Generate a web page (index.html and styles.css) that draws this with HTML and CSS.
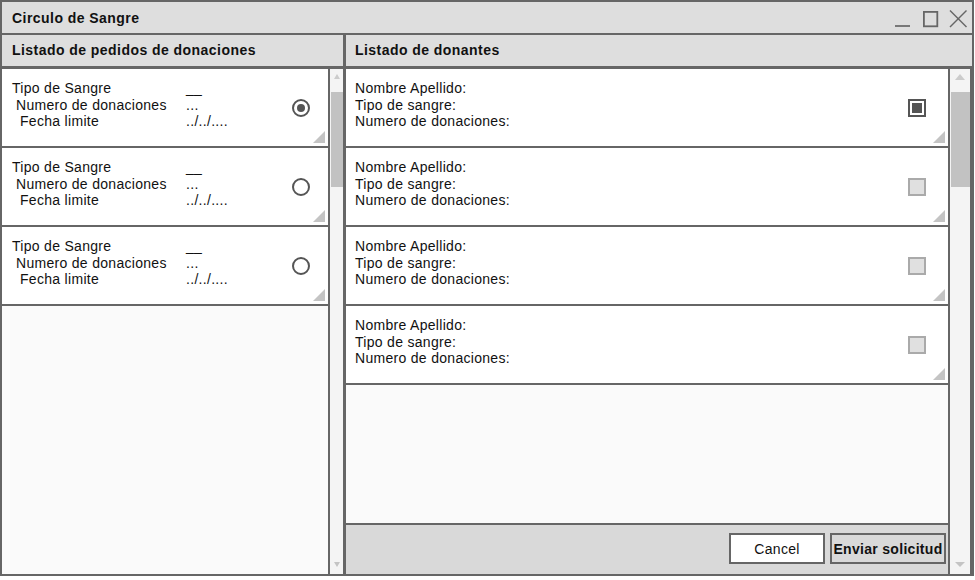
FILE: index.html
```html
<!DOCTYPE html>
<html lang="es">
<head>
<meta charset="utf-8">
<title>Circulo de Sangre</title>
<link rel="stylesheet" href="styles.css">
</head>
<body>
<div class="window">
  <div class="titlebar">
    <span class="title">Circulo de Sangre</span>
    <svg class="controls" width="76" height="31" viewBox="0 0 76 31" aria-hidden="true">
      <line x1="1" y1="24" x2="16" y2="24" stroke="#666" stroke-width="1.7"/>
      <rect x="29.9" y="9.9" width="13.4" height="14.4" fill="none" stroke="#666" stroke-width="1.8"/>
      <line x1="56" y1="8.5" x2="72.5" y2="25" stroke="#666" stroke-width="1.5"/>
      <line x1="72.5" y1="8.5" x2="56" y2="25" stroke="#666" stroke-width="1.5"/>
    </svg>
  </div>
  <div class="main">
    <section class="panel left">
      <div class="panel-header">Listado de pedidos de donaciones</div>
      <div class="panel-body">
        <div class="list">
          <div class="card req">
            <div class="fields">
              <span class="lbl i0">Tipo de Sangre</span><span class="val">__</span>
              <span class="lbl i1">Numero de donaciones</span><span class="val">...</span>
              <span class="lbl i2">Fecha limite</span><span class="val">../../....</span>
            </div>
            <span class="radio on"></span>
          </div>
          <div class="card req">
            <div class="fields">
              <span class="lbl i0">Tipo de Sangre</span><span class="val">__</span>
              <span class="lbl i1">Numero de donaciones</span><span class="val">...</span>
              <span class="lbl i2">Fecha limite</span><span class="val">../../....</span>
            </div>
            <span class="radio"></span>
          </div>
          <div class="card req">
            <div class="fields">
              <span class="lbl i0">Tipo de Sangre</span><span class="val">__</span>
              <span class="lbl i1">Numero de donaciones</span><span class="val">...</span>
              <span class="lbl i2">Fecha limite</span><span class="val">../../....</span>
            </div>
            <span class="radio"></span>
          </div>
        </div>
        <div class="scroll narrow">
          <span class="arr-box top"><span class="arr up"></span></span>
          <span class="thumb"></span>
          <span class="track"></span>
          <span class="arr-box bottom"><span class="arr down"></span></span>
        </div>
      </div>
    </section>
    <section class="panel right">
      <div class="panel-header">Listado de donantes</div>
      <div class="panel-body">
        <div class="rcol">
          <div class="list">
            <div class="card donor">
              <div class="dfields">
                <span>Nombre Apellido:</span>
                <span>Tipo de sangre:</span>
                <span>Numero de donaciones:</span>
              </div>
              <span class="check on"></span>
            </div>
            <div class="card donor">
              <div class="dfields">
                <span>Nombre Apellido:</span>
                <span>Tipo de sangre:</span>
                <span>Numero de donaciones:</span>
              </div>
              <span class="check"></span>
            </div>
            <div class="card donor">
              <div class="dfields">
                <span>Nombre Apellido:</span>
                <span>Tipo de sangre:</span>
                <span>Numero de donaciones:</span>
              </div>
              <span class="check"></span>
            </div>
            <div class="card donor">
              <div class="dfields">
                <span>Nombre Apellido:</span>
                <span>Tipo de sangre:</span>
                <span>Numero de donaciones:</span>
              </div>
              <span class="check"></span>
            </div>
          </div>
          <div class="btnbar">
            <button class="btn cancel" type="button">Cancel</button>
            <button class="btn send" type="button">Enviar solicitud</button>
          </div>
        </div>
        <div class="scroll wide">
          <span class="arr-box top"><span class="arr up"></span></span>
          <span class="thumb"></span>
          <span class="track"></span>
          <span class="arr-box bottom"><span class="arr down"></span></span>
        </div>
      </div>
    </section>
  </div>
</div>
</body>
</html>
```

FILE: styles.css
```css
* {
  box-sizing: border-box;
  margin: 0;
  padding: 0;
}

body {
  background: #ffffff;
  font-family: "Liberation Sans", Arial, sans-serif;
  font-size: 14px;
  color: #111111;
}

.window {
  width: 974px;
  height: 576px;
  border: 2px solid #666666;
  display: flex;
  flex-direction: column;
  background: #fafafa;
}

.titlebar {
  height: 33px;
  flex: none;
  background: #dedede;
  border-bottom: 2px solid #666666;
  display: flex;
  align-items: center;
  padding-left: 10px;
  padding-right: 2px;
}

.title {
  font-weight: bold;
  letter-spacing: 0.45px;
  color: #111111;
}

.controls {
  margin-left: auto;
  display: block;
}

.main {
  flex: 1;
  display: flex;
  min-height: 0;
}

.panel {
  display: flex;
  flex-direction: column;
  min-height: 0;
}

.panel.left {
  width: 344px;
  flex: none;
  border-right: 3px solid #666666;
}

.panel.right {
  flex: 1;
}

.panel-header {
  height: 34px;
  flex: none;
  background: #dedede;
  border-bottom: 3px solid #666666;
  display: flex;
  align-items: center;
  font-weight: bold;
  letter-spacing: 0.45px;
  padding-left: 10px;
  padding-bottom: 1px;
}

.panel.right .panel-header {
  padding-left: 9px;
}

.panel-body {
  flex: 1;
  display: flex;
  min-height: 0;
}

.list {
  flex: 1;
  background: #fafafa;
  display: flex;
  flex-direction: column;
  min-height: 0;
}

.panel.left .list {
  border-right: 2px solid #666666;
}

.rcol {
  flex: 1;
  display: flex;
  flex-direction: column;
  border-right: 2px solid #666666;
}

.card {
  height: 79px;
  flex: none;
  background: #ffffff;
  border-bottom: 2px solid #666666;
  display: flex;
  align-items: flex-start;
  position: relative;
  line-height: 16.6px;
  letter-spacing: 0.3px;
  padding-top: 11px;
}

.card::after {
  content: "";
  position: absolute;
  right: 3px;
  bottom: 3px;
  width: 12px;
  height: 12px;
  background: #c4c4c4;
  clip-path: polygon(100% 0, 100% 100%, 0 100%);
}

.card.req {
  padding-left: 10px;
}

.card.donor {
  padding-left: 9px;
}

.fields {
  display: grid;
  grid-template-columns: 174px auto;
}

.lbl.i1 {
  padding-left: 4px;
}

.lbl.i2 {
  padding-left: 8px;
}

.dfields {
  display: flex;
  flex-direction: column;
}

.radio {
  align-self: center;
  margin-left: auto;
  margin-right: 18px;
  margin-top: -10px;
  width: 18px;
  height: 18px;
  border: 2px solid #555555;
  border-radius: 50%;
  background: #ffffff;
  display: flex;
  align-items: center;
  justify-content: center;
}

.radio.on::before {
  content: "";
  width: 8px;
  height: 8px;
  border-radius: 50%;
  background: #555555;
}

.check {
  align-self: center;
  margin-left: auto;
  margin-right: 22px;
  margin-top: -10px;
  width: 18px;
  height: 18px;
  border: 2px solid #aaaaaa;
  background: #e0e0e0;
}

.check.on {
  border-color: #555555;
  background: #555555;
  box-shadow: inset 0 0 0 2px #ffffff;
}

.btnbar {
  height: 51px;
  flex: none;
  background: #d9d9d9;
  border-top: 2px solid #666666;
  display: flex;
  justify-content: flex-end;
  align-items: flex-start;
  gap: 5px;
  padding-top: 8px;
  padding-right: 2px;
}

.btn {
  height: 31px;
  border: 2px solid #666666;
  font-family: "Liberation Sans", Arial, sans-serif;
  font-size: 14px;
  color: #111111;
  letter-spacing: 0.3px;
}

.btn.cancel {
  width: 96px;
  background: #ffffff;
}

.btn.send {
  width: 116px;
  background: #d9d9d9;
  font-weight: bold;
  letter-spacing: 0.3px;
  padding: 0;
}

.scroll {
  flex: none;
  background: #f4f4f4;
  display: flex;
  flex-direction: column;
  align-items: stretch;
}

.scroll.narrow {
  width: 13px;
}

.scroll.wide {
  width: 22px;
  border-right: 2px solid #666666;
}

.arr-box {
  display: flex;
  justify-content: center;
  flex: none;
}

.arr-box.top {
  height: 23px;
  padding-top: 5px;
}

.arr-box.bottom {
  height: 12px;
}

.thumb {
  height: 95px;
  flex: none;
  background: #c2c2c2;
}

.scroll.narrow .thumb {
  margin-left: 1px;
}

.scroll.wide .thumb {
  margin-left: 1px;
}

.track {
  flex: 1;
}

.arr {
  width: 0;
  height: 0;
  border-left: 3px solid transparent;
  border-right: 3px solid transparent;
}

.arr.up {
  border-bottom: 5px solid #cccccc;
}

.arr.down {
  border-top: 5px solid #c4c4c4;
}

.scroll.wide .arr {
  border-left-width: 5px;
  border-right-width: 5px;
}

.scroll.wide .arr.up {
  border-bottom-width: 6px;
}

.scroll.wide .arr.down {
  border-top-width: 5px;
}
```
